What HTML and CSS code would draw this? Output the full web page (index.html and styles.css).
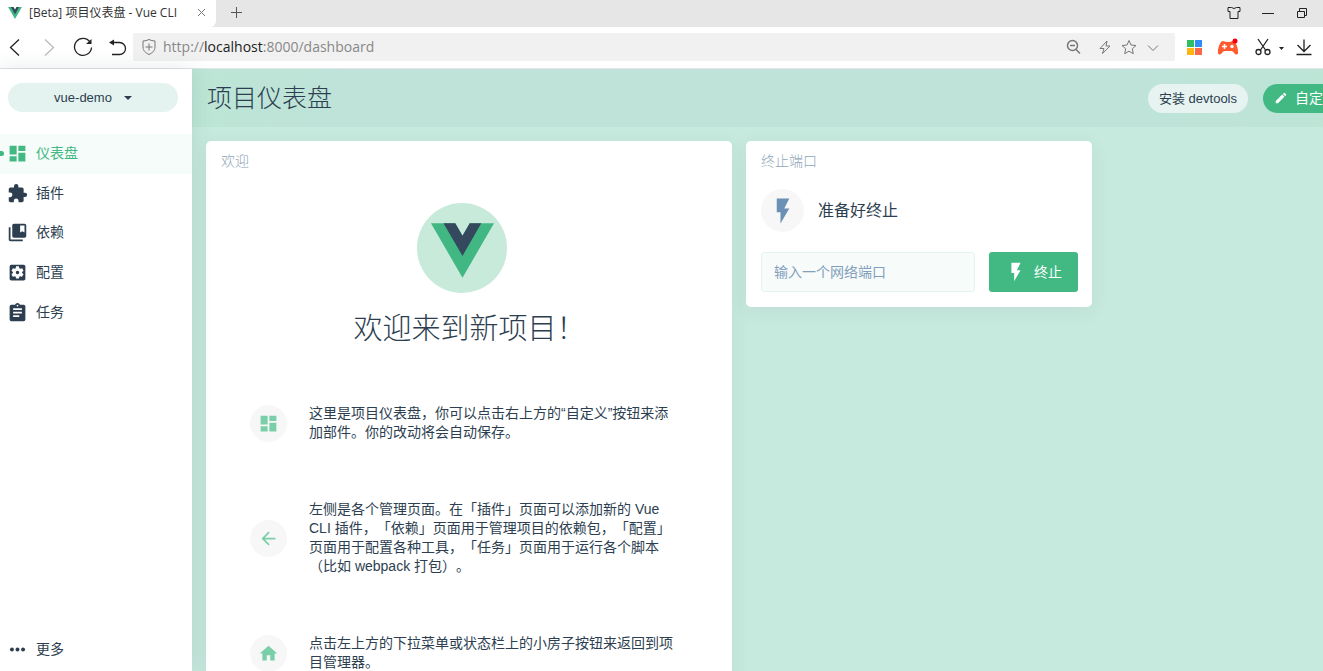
FILE: index.html
```
<!DOCTYPE html>
<html lang="zh-CN">
<head>
    <meta charset="UTF-8">
    <meta name="viewport" content="width=device-width, initial-scale=1.0">
    <title>[Beta] 项目仪表盘 - Vue CLI</title>
    <link rel="stylesheet" href="styles.css">
</head>
<body>
    <!-- Browser window -->
    <div class="tab-bar">
        <div class="tab">
            <svg class="tab-logo" viewBox="0 0 262 227"><path fill="#41b883" d="M161 0l-30 52L101 0H0l131 227L262 0z"/><path fill="#34495e" d="M161 0l-30 52L101 0H52l79 136L209 0z"/></svg>
            <span class="tab-title">[Beta] 项目仪表盘 - Vue CLI</span>
            <button class="tab-close" aria-label="关闭标签"><svg width="9" height="9" viewBox="0 0 9 9"><path d="M1 1l7 7M8 1L1 8"/></svg></button>
        </div>
        <button class="tab-new" aria-label="新标签"><svg width="13" height="13" viewBox="0 0 13 13"><path d="M6.500 1v11M1 6.500h11"/></svg></button>
        <div class="window-buttons">
            <button aria-label="皮肤"><svg width="14" height="14" viewBox="0 0 14 14"><path d="M1 1.500h3.500q2.500 2 5 0H13v4h-2V12.500H3V5.500H1z"/></svg></button>
            <button aria-label="最小化"><svg width="14" height="14" viewBox="0 0 14 14"><path d="M1 7.500h12"/></svg></button>
            <button aria-label="还原"><svg width="14" height="14" viewBox="0 0 14 14"><path d="M2.500 5.500h7v6h-7zM4.500 5V2.500h7v7H10"/></svg></button>
        </div>
    </div>
    <div class="toolbar">
        <button class="nav-btn" aria-label="后退"><svg width="20" height="20" viewBox="0 0 20 20"><path d="M14 2.500L5.500 10.500l8.500 8"/></svg></button>
        <button class="nav-btn disabled" aria-label="前进"><svg width="20" height="20" viewBox="0 0 20 20"><path d="M6 2.500l8.500 8-8.500 8"/></svg></button>
        <button class="nav-btn" aria-label="刷新"><svg width="20" height="20" viewBox="0 0 20 20"><path d="M17 5A8.500 8.500 0 1 0 18.500 10.500"/><path class="solid" d="M18.500 2v5H13z"/></svg></button>
        <button class="nav-btn" aria-label="恢复"><svg width="20" height="20" viewBox="0 0 20 20"><path d="M5 5.500h7.500a6 6 0 0 1 0 12H5"/><path class="solid" d="M2 5.500l5-3v6z"/></svg></button>
        <div class="address">
            <svg class="shield" width="16" height="18" viewBox="0 0 16 18"><path d="M8 1.500q3 1.500 6 1.500v6c0 4-3 6-6 7.500C5 15 2 13 2 9V3q3 0 6-1.500zM8 5.500v7M4.500 9h7"/></svg>
            <span class="url">http://<b>localhost</b>:8000/dashboard</span>
            <div class="address-icons">
                <svg width="18" height="18" viewBox="0 0 18 18"><g stroke-width="1.500"><circle cx="7.500" cy="7.500" r="5"/><path d="M5 7.500h5M11 11.500l4 4"/></g></svg>
                <svg class="flash" width="14" height="16" viewBox="0 0 14 16"><path d="M9 2L2 9.500h4L4.500 14.500 12 7H8z"/></svg>
                <svg width="16" height="16" viewBox="0 0 16 16"><path d="M8 1.500l2 4.500 5 .5-3.700 3.300 1 4.900L8 12.200l-4.300 2.500 1-4.900L1 6.500 6 6z"/></svg>
                <svg width="14" height="14" viewBox="0 0 14 14"><path d="M2 5.500l5 5 5-5"/></svg>
            </div>
        </div>
        <div class="tools">
            <svg width="16" height="16" viewBox="0 0 16 16"><path fill="#2dbe60" d="M1 1h7v7H1z"/><path fill="#2f8df7" d="M9 1h7v7H9z"/><path fill="#ffb411" d="M1 9h7v7H1z"/><path fill="#fa6848" d="M9 9h7v7H9z"/></svg>
            <svg width="22" height="20" viewBox="0 0 22 20"><path fill="#ff5b2e" d="M6 4q5 2 10 0c3 0 5.500 8 5 12-.3 2-2.500 2-3.500 .5-1-1.500-2-2.500-3-2.500h-7c-1 0-2 1-3 2.500S1.300 18 1 16C.5 12 3 4 6 4z"/><path stroke="#fff" stroke-width="1.500" d="M7.500 7v5M5 9.500h5"/><circle cx="15" cy="9.500" r="1.700" fill="#fff"/><circle cx="18" cy="4" r="2.500" fill="#f00014"/></svg>
            <svg class="line" width="30" height="20" viewBox="0 0 30 20"><path d="M4 2l7.500 11M14 2L6.500 13"/><circle cx="4.500" cy="15" r="2.500"/><circle cx="13.500" cy="15" r="2.500"/><path class="solid" d="M25 10h5l-2.500 3z"/></svg>
            <svg class="line" width="18" height="18" viewBox="0 0 18 18"><path d="M9 1.500v12M2.500 7L9 13.500 15.500 7M1.500 16.500h15"/></svg>
        </div>
    </div>

    <!-- Vue UI -->
    <div class="app">
        <aside class="sidebar">
            <button class="project-select">vue-demo <svg width="8" height="4" viewBox="0 0 8 4"><path d="M0 0h8L4 4z"/></svg></button>
            <nav class="menu">
                <a href="#" class="menu-item active"><svg class="icon" viewBox="0 0 24 24"><path d="M3 13h8V3H3v10zm0 8h8v-6H3v6zm10 0h8V11h-8v10zm0-18v6h8V3h-8z"/></svg>仪表盘</a>
                <a href="#" class="menu-item"><svg class="icon" viewBox="0 0 24 24"><path d="M20.500 11H19V7c0-1.100-.9-2-2-2h-4V3.500a2.500 2.500 0 0 0-5 0V5H4c-1.100 0-2 .9-2 2v3.800h1.500a2.700 2.700 0 0 1 0 5.400H2V20c0 1.100.9 2 2 2h3.800v-1.500a2.700 2.700 0 0 1 5.400 0V22H17c1.100 0 2-.9 2-2v-4h1.500a2.500 2.500 0 0 0 0-5z"/></svg>插件</a>
                <a href="#" class="menu-item"><svg class="icon" viewBox="0 0 24 24"><path d="M4 6H2v14c0 1.100.9 2 2 2h14v-2H4V6z"/><path d="M20 2H8c-1.100 0-2 .9-2 2v12c0 1.100.9 2 2 2h12c1.100 0 2-.9 2-2V4c0-1.100-.9-2-2-2zm0 10l-2.500-1.500L15 12V4h5v8z"/></svg>依赖</a>
                <a href="#" class="menu-item"><svg class="icon" viewBox="0 0 24 24"><path d="M12 10a2 2 0 1 0 0 4 2 2 0 0 0 0-4zm7-7H5a2 2 0 0 0-2 2v14c0 1.100.89 2 2 2h14c1.110 0 2-.9 2-2V5a2 2 0 0 0-2-2zm-1.750 9c0 .23-.02.46-.05.68l1.480 1.160c.13.11.17.3.08.45l-1.400 2.420c-.09.15-.27.21-.43.15l-1.740-.7c-.36.28-.76.51-1.180.69l-.26 1.850c-.03.17-.18.3-.35.3h-2.800c-.17 0-.32-.13-.35-.29l-.26-1.850c-.43-.18-.82-.41-1.180-.69l-1.740.7c-.16.06-.34 0-.43-.15l-1.400-2.420a.35.35 0 0 1 .08-.45l1.480-1.160a5.400 5.400 0 0 1 0-1.370l-1.480-1.160a.35.35 0 0 1-.08-.45l1.400-2.420c.09-.15.27-.21.43-.15l1.740.7c.36-.28.76-.51 1.180-.69l.26-1.850c.03-.17.18-.3.35-.3h2.800c.17 0 .32.13.35.29l.26 1.850c.43.18.82.41 1.180.69l1.740-.7c.16-.06.34 0 .43.15l1.400 2.420c.09.15.05.34-.08.45l-1.480 1.160c.03.23.05.46.05.69z"/></svg>配置</a>
                <a href="#" class="menu-item"><svg class="icon" viewBox="0 0 24 24"><path d="M19 3h-4.180a3 3 0 0 0-5.640 0H5a2 2 0 0 0-2 2v15a2 2 0 0 0 2 2h14a2 2 0 0 0 2-2V5a2 2 0 0 0-2-2zm-7 0a1 1 0 1 1 0 2 1 1 0 0 1 0-2zm2 14H7v-2h7v2zm3-4H7v-2h10v2zm0-4H7V7h10v2z"/></svg>任务</a>
            </nav>
            <a href="#" class="menu-item more"><svg class="icon" viewBox="0 0 24 24"><circle cx="5" cy="12" r="2.500"/><circle cx="12" cy="12" r="2.500"/><circle cx="19" cy="12" r="2.500"/></svg>更多</a>
        </aside>

        <main class="content">
            <header class="page-header">
                <h1>项目仪表盘</h1>
                <div class="header-actions">
                    <button class="round-btn">安装 devtools</button>
                    <button class="round-btn primary"><svg width="14" height="14" viewBox="0 0 24 24"><path d="M3 17.250V21h3.750L17.800 9.900l-3.700-3.700L3 17.250zM20.700 7a1 1 0 0 0 0-1.400l-2.300-2.300a1 1 0 0 0-1.400 0l-1.800 1.800L19 8.900 20.700 7z"/></svg>自定义</button>
                </div>
            </header>

            <div class="widgets">
                <section class="card welcome">
                    <h2 class="card-title">欢迎</h2>
                    <div class="logo">
                        <svg width="63" height="55" viewBox="0 0 262 227"><path fill="#41b883" d="M161 0l-30 52L101 0H0l131 227L262 0z"/><path fill="#34495e" d="M161 0l-30 52L101 0H52l79 136L209 0z"/></svg>
                    </div>
                    <p class="welcome-title">欢迎来到新项目！</p>
                    <ul class="tips">
                        <li>
                            <span class="tip-icon"><svg viewBox="0 0 24 24"><path d="M3 13h8V3H3v10zm0 8h8v-6H3v6zm10 0h8V11h-8v10zm0-18v6h8V3h-8z"/></svg></span>
                            <p>这里是项目仪表盘，你可以点击右上方的“自定义”按钮来添加部件。你的改动将会自动保存。</p>
                        </li>
                        <li>
                            <span class="tip-icon"><svg viewBox="0 0 24 24"><path d="M20 11H7.830l5.590-5.590L12 4l-8 8 8 8 1.410-1.410L7.830 13H20v-2z"/></svg></span>
                            <p>左侧是各个管理页面。在「插件」页面可以添加新的 Vue CLI 插件，「依赖」页面用于管理项目的依赖包，「配置」页面用于配置各种工具，「任务」页面用于运行各个脚本（比如 webpack 打包）。</p>
                        </li>
                        <li>
                            <span class="tip-icon"><svg viewBox="0 0 24 24"><path d="M10 20v-6h4v6h5v-8h3L12 3 2 12h3v8z"/></svg></span>
                            <p>点击左上方的下拉菜单或状态栏上的小房子按钮来返回到项目管理器。</p>
                        </li>
                    </ul>
                </section>

                <section class="card kill-port">
                    <h2 class="card-title">终止端口</h2>
                    <div class="status">
                        <span class="status-icon"><svg width="30" height="30" viewBox="0 0 24 24"><path d="M7 2v11h3v9l7-12h-4l4-8z"/></svg></span>
                        准备好终止
                    </div>
                    <form class="port-form">
                        <input type="text" aria-label="网络端口" placeholder="输入一个网络端口">
                        <button type="button"><svg width="22" height="22" viewBox="0 0 24 24"><path d="M7 2v11h3v9l7-12h-4l4-8z"/></svg>终止</button>
                    </form>
                </section>
            </div>
        </main>
    </div>
</body>
</html>
```
FILE: styles.css
```
* {
    box-sizing: border-box;
}
body {
    margin: 0;
    height: 100vh;
    display: flex;
    flex-direction: column;
    overflow: hidden;
    background: #fff;
    color: #2c3e50;
    font: 14px/19px "Liberation Sans", "Noto Sans CJK SC", sans-serif;
    text-spacing-trim: space-all; /* full-width punctuation */
}
button {
    border: 0;
    padding: 0;
    background: none;
    color: inherit;
    font: inherit;
    cursor: pointer;
}
svg {
    display: block;
    flex-shrink: 0;
}
h1, h2, p, ul {
    margin: 0;
    padding: 0;
    font-weight: 300;
}
a {
    color: inherit;
    text-decoration: none;
}

/* Tabs */
.tab-bar {
    display: flex;
    align-items: center;
    height: 27px;
    flex-shrink: 0;
    background: #e6e6e6;
    font: 12px/18px "Open Sans", "Noto Sans CJK SC", sans-serif;
}
.tab-bar svg {
    fill: none;
    stroke: #222;
}
.tab {
    display: flex;
    align-items: center;
    width: 216px;
    height: 27px;
    padding: 0 10px 2px 8px;
    border-radius: 0 0 6px 0;
    background: #fff;
}
.tab .tab-logo {
    width: 14px;
    height: 12px;
    margin-right: 7px;
    stroke: none;
}
.tab-title {
    flex: 1;
    color: #333;
    white-space: nowrap;
}
.tab-close svg {
    stroke: #777;
}
.tab-new {
    margin: 0 14px 3px;
}
.tab-new svg {
    stroke: #555;
}
.window-buttons {
    display: flex;
    gap: 20px;
    margin-left: auto;
    padding: 0 14px 2px 0;
}

/* Address bar */
.toolbar {
    display: flex;
    align-items: center;
    height: 42px;
    flex-shrink: 0;
    padding: 0 10px 2px 5px;
    border-bottom: 1px solid #e2e4e6;
}
.nav-btn {
    margin-right: 14px;
}
.nav-btn:nth-of-type(4) {
    margin-right: 6px;
}
.nav-btn svg, .line {
    fill: none;
    stroke: #222;
    stroke-width: 1.3;
}
.solid {
    fill: #222;
    stroke: none;
}
.nav-btn.disabled svg {
    stroke: #bbb;
}
.address {
    flex: 1;
    display: flex;
    align-items: center;
    height: 28px;
    padding: 0 15px 0 8px;
    border-radius: 2px;
    background: #f1f1f1;
    color: #888;
    font: 14px/20px "Open Sans", "Noto Sans", sans-serif;
}
.address svg {
    fill: none;
    stroke: #777;
}
.address b {
    color: #222;
    font-weight: 400;
}
.url {
    margin-left: 6px;
}
.address-icons {
    display: flex;
    align-items: center;
    gap: 9px;
    margin-left: auto;
}
.address-icons .flash {
    margin-left: 6px;
}
.tools {
    display: flex;
    align-items: center;
    gap: 15px;
    margin-left: 11px;
}
.tools svg:last-child {
    margin-left: -4px;
}

/* Sidebar */
.app {
    flex: 1;
    min-height: 0;
    display: flex;
    background: #c7eade;
}
.sidebar {
    position: relative;
    display: flex;
    flex-direction: column;
    width: 192px;
    flex-shrink: 0;
    background: #fff;
    box-shadow: 0 0 20px rgba(44, 62, 80, 0.12);
}
.project-select {
    display: flex;
    align-items: center;
    justify-content: center;
    gap: 12px;
    height: 29px;
    margin: 14px 14px 22px 8px;
    border-radius: 15px;
    background: #e4f3ef;
    font-size: 13px;
}
.project-select svg, .icon {
    fill: currentColor;
}
.menu {
    display: grid;
    grid-auto-rows: 1fr;
    height: 198px;
}
.menu-item {
    position: relative;
    display: flex;
    align-items: center;
    gap: 8px;
    padding-left: 7px;
}
.menu-item.active {
    background: #f6fcfa;
    color: #42b983;
}
.menu-item.active::before {
    content: "";
    position: absolute;
    left: -2px;
    width: 6px;
    height: 5px;
    border-radius: 3px;
    background: #42b983;
}
.icon {
    width: 21px;
    height: 21px;
}
.menu-item.more {
    height: 40px;
    margin: auto 0 2px;
}
.more .icon {
    padding: 1px;
}

/* Page header, wider than the window like the rest of the page */
.content {
    flex: 1;
    min-width: 0;
    overflow: hidden;
}
.page-header {
    display: flex;
    align-items: center;
    justify-content: space-between;
    width: calc(100% + 45px);
    height: 58px;
    padding: 0 14px 0 15px;
    background: linear-gradient(90deg, #bce6d6, #bfe2d9 15%, #bfe2d9 75%, #bce6d6);
}
.page-header h1 {
    font-size: 25px;
    line-height: 36px;
}
.header-actions {
    display: flex;
    gap: 15px;
}
.round-btn {
    display: flex;
    align-items: center;
    justify-content: center;
    gap: 7px;
    width: 100px;
    height: 29px;
    border-radius: 15px;
    background: #e6f3f0;
    font-size: 13px;
}
.round-btn.primary {
    justify-content: flex-start;
    width: 91px;
    padding-left: 11px;
    background: #42b983;
    color: #fff;
    font-size: 14px;
}
.round-btn svg {
    fill: #fff;
}

/* Widgets */
.widgets {
    display: flex;
    align-items: flex-start;
    gap: 14px;
    padding: 14px;
}
.card {
    padding: 11px 14px 15px 15px;
    border-radius: 5px;
    background: #fff;
    box-shadow: 0 4px 20px rgba(44, 62, 80, 0.07);
}
.card-title {
    color: #8fa5b6;
    font-size: 14px;
    line-height: 19px;
}
.welcome {
    width: 526px;
    height: 620px;
}
.kill-port {
    width: 346px;
}
.logo {
    display: flex;
    align-items: center;
    justify-content: center;
    width: 90px;
    height: 90px;
    margin: 32px auto 0 196px;
    border-radius: 50%;
    background: #c7eadb;
}
.logo svg {
    margin-top: 4px;
}
.welcome-title {
    margin: 15px 0 54px;
    font-size: 29px;
    line-height: 42px;
    text-align: center;
}
.tips {
    display: grid;
    gap: 58px;
    padding: 0 42px 0 29px;
    list-style: none;
}
.tips li {
    display: flex;
    align-items: center;
    gap: 22px;
}
.tips p {
    width: 370px;
    font-weight: 400;
}
.tip-icon, .status-icon {
    display: flex;
    align-items: center;
    justify-content: center;
    flex-shrink: 0;
    width: 37px;
    height: 37px;
    border-radius: 50%;
    background: #f7f7f7;
}
.tip-icon svg {
    width: 21px;
    height: 21px;
    fill: #7acfa8;
}
.status {
    display: flex;
    align-items: center;
    gap: 14px;
    margin: 18px 0 20px;
    font-size: 16px;
}
.status-icon {
    width: 43px;
    height: 43px;
}
.status-icon svg {
    fill: #6b8fb5;
}
.port-form {
    display: flex;
    gap: 14px;
}
.port-form input {
    flex: 1;
    min-width: 0;
    height: 40px;
    padding: 0 12px;
    border: 1px solid #e4f5ef;
    border-radius: 3px;
    background: #f7fbfa;
    color: inherit;
    font: inherit;
}
.port-form input::placeholder {
    color: #829fbd;
    opacity: 1;
}
.port-form button {
    display: flex;
    align-items: center;
    justify-content: center;
    gap: 7px;
    width: 89px;
    height: 40px;
    border-radius: 3px;
    background: #42b983;
    color: #fff;
}
.port-form button svg {
    fill: #fff;
}
```
